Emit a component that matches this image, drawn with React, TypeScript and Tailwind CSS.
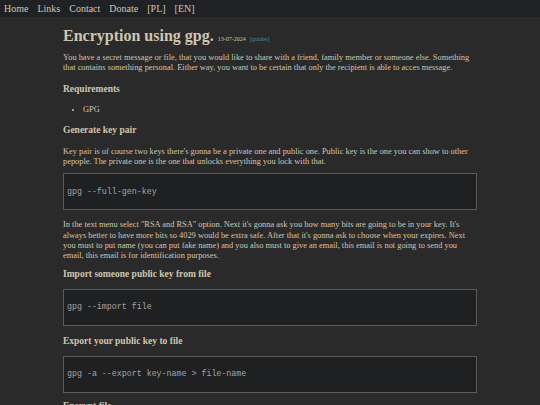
export default function App() {
  const nav = ["Home", "Links", "Contact", "Donate", "[PL]", "[EN]"];

  return (
    <div
      className="min-h-[405px] bg-[#2a2a2a] text-[#cfc6b0]"
      style={{ fontFamily: '"Liberation Serif", "Times New Roman", serif' }}
    >
      <nav className="flex h-[17px] items-center gap-[9px] bg-[#202124] px-[4px] text-[10px] text-[#cfc6b0]">
        {nav.map((item) => (
          <a key={item} href="#" className="leading-none">
            {item}
          </a>
        ))}
      </nav>

      <main className="mx-auto w-[414px] pt-[9px] text-[8.4px] leading-[10.3px]">
        <h1 className="flex items-baseline gap-[4px]">
          <span className="text-[16px] font-bold leading-[20px]">Encryption using gpg.</span>
          <span className="text-[6px]">13-07-2024</span>
          <a href="#" className="text-[6px] text-[#4b8d9c]">
            [guides]
          </a>
        </h1>

        <p className="mt-[7px]">
          You have a secret message or file, that you would like to share with a friend, family member or
          someone else. Something that contains something personal. Either way, you want to be certain that
          only the recipient is able to acces message.
        </p>

        <h3 className="mt-[9px] text-[9.5px] font-bold leading-[12px]">Requirements</h3>
        <ul className="mt-[10px] list-disc pl-[20px]">
          <li>GPG</li>
        </ul>

        <h3 className="mt-[9px] text-[9.5px] font-bold leading-[12px]">Generate key pair</h3>
        <p className="mt-[11px]">
          Key pair is of course two keys there's gonna be a private one and public one. Public key is the one
          you can show to other pepople. The private one is the one that unlocks everything you lock with
          that.
        </p>
        <CodeBox className="mt-[6px]">gpg --full-gen-key</CodeBox>

        <p className="mt-[10px]">
          In the text menu select "RSA and RSA" option. Next it's gonna ask you how many bits are going to be
          in your key. It's always better to have more bits so 4029 would be extra safe. After that it's gonna
          ask to choose when your expires. Next you must to put name (you can put fake name) and you also must
          to give an email, this email is not going to send you email, this email is for identification
          purposes.
        </p>

        <h3 className="mt-[6px] text-[9.5px] font-bold leading-[12px]">Import someone public key from file</h3>
        <CodeBox className="mt-[9px]">gpg --import file</CodeBox>

        <h3 className="mt-[9px] text-[9.5px] font-bold leading-[12px]">Export your public key to file</h3>
        <CodeBox className="mt-[9px]">gpg -a --export key-name &gt; file-name</CodeBox>

        <h3 className="mt-[7px] text-[9.5px] font-bold leading-[12px]">Encrypt file</h3>
      </main>
    </div>
  );
}

function CodeBox({ children, className }: { children: React.ReactNode; className: string }) {
  return (
    <pre
      className={`${className} flex h-[37px] items-center border border-[#5a5a5a] bg-[#1f2022] px-[3px] text-[8.3px] text-[#a3a3a3]`}
      style={{ fontFamily: '"Liberation Mono", "Courier New", monospace' }}
    >
      {children}
    </pre>
  );
}
